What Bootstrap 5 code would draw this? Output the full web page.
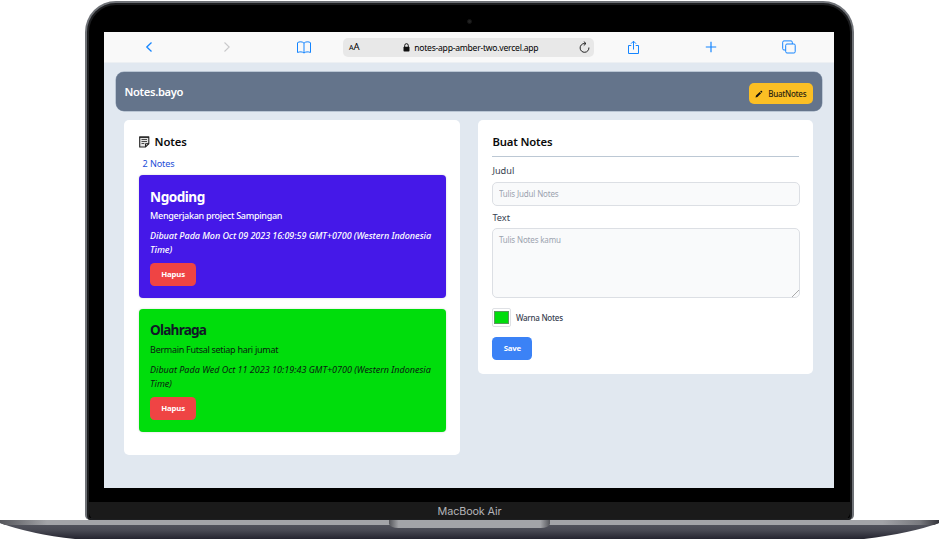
<!DOCTYPE html>
<html lang="id">
<head>
<meta charset="utf-8">
<meta name="viewport" content="width=device-width, initial-scale=1">
<title>Notes.bayo</title>
<link href="https://cdn.jsdelivr.net/npm/bootstrap@5.3.0/dist/css/bootstrap.min.css" rel="stylesheet">
<style>
body{font-family:"Noto Sans","Open Sans",sans-serif;background:#fff;height:539px;overflow:hidden;color:#111}
.lid{width:769px;height:519px;margin:1px auto 0 85px;background:#000;border:2px solid #6f7277;border-bottom:0;border-radius:31px 31px 5px 5px;box-shadow:inset 0 0 0 2px #1d1e20}
.bezel{height:29px}
.cam{width:5px;height:5px;border-radius:50%;background:#222;border:1px solid #151515;margin-top:7px}
.display{width:730px;height:456px;margin-left:17px;background:#e1e8f0}
.tools{height:31px;background:#f9f9f9;border-bottom:1px solid #edf0f3;display:grid;grid-template-columns:89px 67px 83px 251px 79px 76px 83px}
.tools svg{display:block}
.tools .ic{display:flex;align-items:center;justify-content:center}
.url{height:19px;background:#e8e8e8;border-radius:5px;margin-top:6px;color:#000;font-size:8.6px;padding:0 4px 0 6px}
.url span{line-height:20px;white-space:nowrap}
.addr{letter-spacing:-.25px;padding-left:3px}
.appbar{height:38.5px;margin:9px 12px 0 11.5px;background:#64748b;border-radius:8px;padding:2px 9px 0 9px;box-shadow:0 0 0 .5px #94a3b8}
.brand{font-size:11.2px;font-weight:600;color:#fff;line-height:16px;letter-spacing:-.34px}
.btn-y{background:#fbbf24;color:#2b2410;border-radius:5px;width:64.5px;height:21px;font-size:8px;font-weight:500;letter-spacing:-.28px;margin-top:3px}
.btn-y svg{margin-right:5px}
.cols{margin:9.5px 20px 0 20.4px;gap:18px}
.panel{background:#fff;border-radius:5px;padding:14px;width:336px;flex:none}
.panel.p-list{height:335px;padding-left:14.2px}
.panel.p-form{width:335px;height:254px}
.ttl{font-size:11.3px;font-weight:600;line-height:16px;color:#0b0b0b;letter-spacing:-.14px}
.ttl svg{margin-right:5px}
.count{font-size:9.1px;line-height:13px;color:#1d4ed8;margin:7px 0 5px 4px;letter-spacing:-.12px}
.note{height:123px;border-radius:4px;padding:12.5px 11.5px 0;box-shadow:0 0 2px #8886;margin-bottom:10.5px}
.violet{background:#4518e8;color:#fff}
.green{background:#00dd0c;color:#0a1a10}
.note h2{font-size:13.6px;font-weight:700;letter-spacing:-.5px;line-height:18px;margin:0 0 1px}
.green h2{letter-spacing:-.8px;color:#111827}
.note p{font-size:9px;line-height:14px;margin:3.5px 0 0;white-space:nowrap;letter-spacing:-.29px}
.note p.dt{font-style:italic;margin-top:6px;letter-spacing:0}
.violet p{font-weight:500}
.violet p.dt{letter-spacing:-.06px}
.btn-s{font-size:7.8px;font-weight:700;color:#fff;line-height:23px;height:23px;border-radius:4.5px;padding:0;border:0;display:block;letter-spacing:-.2px}
.hapus{background:#ef4444;width:46px;margin-top:6px}
.save{background:#3b82f6;width:40px;margin-top:10px}
.btn-s:hover{color:#fff}
.hline{height:1px;background:#bcc8d4;margin:6px 0 7px}
.lb{font-size:9.2px;line-height:13px;color:#374151;display:block}
.inp{display:block;width:307.5px;font-size:8px;line-height:12px;background:#f9fafb;border:1px solid #dcdfe4;border-radius:5px;padding:5px 5.5px;color:#6b7280;letter-spacing:-.16px}
.inp::placeholder{color:#9ca3af;opacity:1}
input.inp{height:24px;margin:4.5px 0 5.5px}
textarea.inp{height:70px;margin-top:4px;resize:vertical}
textarea.inp::-webkit-resizer{background:linear-gradient(135deg,transparent 76%,#aaa 76% 79%,transparent 79% 87%,#aaa 87% 90%,transparent 90%)}
.swatch{width:19px;height:19px;border:1px solid #dfe1e5;border-radius:2px;padding:2px 1px;background:#fff}
.swatch i{display:block;height:13px;background:#00dd0c;border:1px solid #58975c}
.sw-l{font-size:8px;line-height:12px;color:#374151;font-weight:500;margin-left:4.5px;letter-spacing:-.25px}
.chin{margin:13.5px 2px 0;height:17.5px;background:#1a1a1a;border-radius:0 0 6px 6px;color:#b4b4b8;font:10.8px/19px Inter,sans-serif;text-align:center;letter-spacing:-.12px}
.base{display:block}
</style>
</head>
<body>
<div class="lid">
  <div class="bezel d-flex align-items-center justify-content-center"><div class="cam"></div></div>
  <main class="display">
    <div class="tools">
      <div class="ic"><svg width="8" height="12" viewBox="0 0 8 12" fill="none" stroke="#1585ff" stroke-width="1.3"><path d="M6.5 1.5 1.8 6l4.7 4.5"/></svg></div>
      <div class="ic"><svg width="8" height="12" viewBox="0 0 8 12" fill="none" stroke="#c9c9cb" stroke-width="1.1"><path d="M1.5 1.5 6.2 6l-4.7 4.5"/></svg></div>
      <div class="ic ps-1"><svg width="16" height="13" viewBox="0 0 16 13" fill="none" stroke="#1585ff"><path d="M8 2.2C6.8.5 3 .4 1.5 1.7v9.8c2-1 5.2-.8 6.5.5 1.3-1.3 4.5-1.5 6.5-.5V1.700C13 .4 9.200.5 8 2.200V12"/></svg></div>
      <div class="url d-flex align-items-center justify-content-between">
        <span><span style="font-size:7px">A</span><span style="font-size:9.500px">A</span></span>
        <span class="addr d-flex align-items-center gap-1"><svg width="7" height="9" viewBox="0 0 7 9"><rect x=".5" y="3.800" width="6" height="4.700" rx=".8" fill="#111"/><path d="M1.700 4V2.500a1.800 1.800 0 0 1 3.600 0V4" fill="none" stroke="#111"/></svg>notes-app-amber-two.vercel.app</span>
        <svg width="11" height="13" viewBox="0 0 11 13" fill="none" stroke="#222"><path d="M9.900 6.500A4.400 4.400 0 1 1 5.500 2.500h1.300M4.800.6l2.200 1.900-2.200 2"/></svg>
      </div>
      <div class="ic"><svg width="13" height="15" viewBox="0 0 13 15" fill="none" stroke="#1585ff"><path d="M4.300 5.500H1.500v8h10v-8H8.700M6.500 9.500V1.200M4 3.700l2.500-2.500L9 3.700"/></svg></div>
      <div class="ic"><svg width="12" height="12" viewBox="0 0 12 12" stroke="#1585ff" stroke-width="1.200"><path d="M.8 6h10.400M6 .8v10.400"/></svg></div>
      <div class="ic pe-1"><svg width="14" height="14" viewBox="0 0 14 14" fill="none" stroke="#1585ff"><rect x="3.700" y="4" width="9.500" height="9" rx="1.300"/><path d="M3.500 10H2A1.300 1.300 0 0 1 .7 8.700V2.200A1.300 1.300 0 0 1 2 .9h7a1.300 1.300 0 0 1 1.300 1.300V4"/></svg></div>
    </div>
    <nav class="appbar d-flex align-items-center justify-content-between">
      <span class="brand">Notes.bayo</span>
      <button class="btn btn-y p-0 border-0 d-flex align-items-center justify-content-center"><svg width="8" height="8" viewBox="0 0 8 8"><path d="M.5 7.500 1 5.600 4.700 1.900l1.400 1.400L2.400 7zM5.200 1.400l.6-.6q.4-.3.800 0l.6.600q.3.400 0 .8l-.6.600z" fill="#111"/></svg>BuatNotes</button>
    </nav>
    <div class="cols d-flex align-items-start">
      <section class="panel p-list">
        <div class="ttl d-flex align-items-center"><svg width="11" height="12" viewBox="0 0 11 12" fill="none" stroke="#222"><path d="M.7 1v10h5.800l3.300-3.300V1z" fill="#e4e4e4" stroke-width="1.100"/><path d="M.5 1.200h9.500" stroke-width="1.300"/><path d="M2.500 3.500H8M2.500 5.500H8M2.500 7.500h2.800" stroke-width=".8"/><path d="M6.500 11V7.700h3.300"/></svg><span>Notes</span></div>
        <div class="count">2 Notes</div>
        <article class="note violet">
          <h2>Ngoding</h2><p>Mengerjakan project Sampingan</p>
          <p class="dt">Dibuat Pada Mon Oct 09 2023 16:09:59 GMT+0700 (Western Indonesia<br>Time)</p>
          <button class="btn btn-s hapus">Hapus</button>
        </article>
        <article class="note green">
          <h2>Olahraga</h2><p>Bermain Futsal setiap hari jumat</p>
          <p class="dt">Dibuat Pada Wed Oct 11 2023 10:19:43 GMT+0700 (Western Indonesia<br>Time)</p>
          <button class="btn btn-s hapus">Hapus</button>
        </article>
      </section>
      <section class="panel p-form">
        <div class="ttl">Buat Notes</div>
        <div class="hline"></div>
        <label class="lb" for="judul">Judul</label>
        <input id="judul" class="inp" placeholder="Tulis Judul Notes">
        <label class="lb" for="isi">Text</label>
        <textarea id="isi" class="inp" placeholder="Tulis Notes kamu"></textarea>
        <div class="d-flex align-items-center" style="margin-top:10px"><span class="swatch"><i></i></span><span class="sw-l">Warna Notes</span></div>
        <button class="btn btn-s save">Save</button>
      </section>
    </div>
  </main>
  <div class="chin">MacBook Air</div>
</div>
<svg class="base" width="939" height="19" viewBox="0 0 939 19">
  <defs>
    <linearGradient id="top"><stop offset="0" stop-color="#55565b"/><stop offset=".015" stop-color="#6c6d72"/><stop offset=".05" stop-color="#a3a4a8"/><stop offset=".94" stop-color="#a3a4a8"/><stop offset=".98" stop-color="#77787d"/><stop offset="1" stop-color="#33343a"/></linearGradient>
    <linearGradient id="under" x2="0" y2="1"><stop offset="0" stop-color="#595b63"/><stop offset=".55" stop-color="#484953"/><stop offset="1" stop-color="#24242f"/></linearGradient>
    <linearGradient id="notch"><stop offset="0" stop-color="#55565b"/><stop offset=".06" stop-color="#a3a4a8"/><stop offset=".94" stop-color="#a3a4a8"/><stop offset="1" stop-color="#55565b"/></linearGradient>
  </defs>
  <path d="M0 3Q30 14 75 19H864Q912 13 939 3V0H0z" fill="url(#under)"/>
  <path d="M0 0H939V3L934 5H5L0 3z" fill="url(#top)"/>
  <path d="M389 0H550V4Q548 8 541 8H398Q391 8 389 4z" fill="url(#notch)"/>
</svg>
</body>
</html>
